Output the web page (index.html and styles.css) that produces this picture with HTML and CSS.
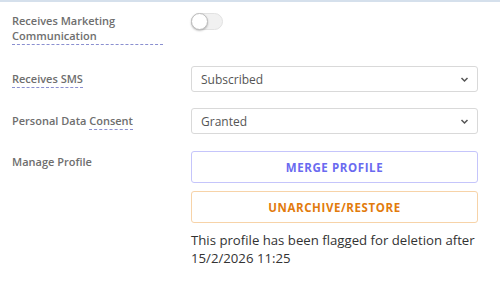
FILE: index.html
```html
<!DOCTYPE html>
<html>
<head>
<meta charset="utf-8">
<link rel="stylesheet" href="styles.css">
</head>
<body>
<div class="panel">
  <div class="row row-toggle">
    <div class="label label-two"><span class="wide-dotted">Receives Marketing<br>Communication</span></div>
    <div class="field"><span class="toggle"><span class="knob"></span></span></div>
  </div>
  <div class="row row-select">
    <div class="label"><span class="dotted">Receives SMS</span></div>
    <div class="field">
      <div class="select"><span>Subscribed</span>
        <svg class="chev" width="9" height="7" viewBox="0 0 9 7"><path d="M1.5 2 L4.5 5 L7.5 2" fill="none" stroke="#555" stroke-width="1.5"/></svg>
      </div>
    </div>
  </div>
  <div class="row row-select">
    <div class="label">Personal Data <span class="dotted">Consent</span></div>
    <div class="field">
      <div class="select"><span>Granted</span>
        <svg class="chev" width="9" height="7" viewBox="0 0 9 7"><path d="M1.5 2 L4.5 5 L7.5 2" fill="none" stroke="#555" stroke-width="1.5"/></svg>
      </div>
    </div>
  </div>
  <div class="row row-manage">
    <div class="label">Manage Profile</div>
    <div class="field stack">
      <button class="btn btn-merge">MERGE PROFILE</button>
      <button class="btn btn-restore">UNARCHIVE/RESTORE</button>
      <p class="note">This profile has been flagged for deletion after 15/2/2026 11:25</p>
    </div>
  </div>
</div>
</body>
</html>
```

FILE: styles.css
```css
html, body {
  margin: 0;
  padding: 0;
  background: #fff;
}
body {
  font-family: "Open Sans", "Noto Sans", sans-serif;
  width: 500px;
  height: 290px;
  overflow: hidden;
}
.panel {
  border-top: 2px solid #d5e0ec;
  padding: 11px 22px 0 12px;
}
.row {
  display: grid;
  grid-template-columns: 179px 1fr;
}
.label {
  font-size: 11px;
  font-weight: 600;
  color: #6e6e6e;
  line-height: 19px;
}
.label-two {
  line-height: 15px;
}
.wide-dotted {
  display: inline-block;
  width: 151px;
  border-bottom: 1px dashed #8a8fd0;
  padding-bottom: 1px;
}
.dotted {
  border-bottom: 1px dashed #8a8fd0;
  padding-bottom: 1px;
}
.row-toggle {
  height: 53px;
}
.toggle {
  display: inline-block;
  margin-top: 0;
  width: 30px;
  height: 15px;
  border-radius: 9px;
  background: #f1f1f1;
  border: 1px solid #e2e2e2;
  position: relative;
}
.knob {
  position: absolute;
  left: -1px;
  top: -1px;
  width: 15px;
  height: 15px;
  border-radius: 50%;
  background: #fff;
  border: 1px solid #bdbdbd;
  box-shadow: 0 1px 2px rgba(0,0,0,0.25);
}
.row-select {
  margin-bottom: 16px;
}
.row-select + .row-select {
  margin-bottom: 17px;
}
.row-select .label {
  padding-top: 3px;
}
.select {
  height: 26px;
  box-sizing: border-box;
  border: 1px solid #d9d9d9;
  border-radius: 3px;
  display: flex;
  align-items: center;
  justify-content: space-between;
  padding: 0 8px 0 9px;
  font-size: 12px;
  color: #555;
}
.row-manage .label {
  padding-top: 1px;
}
.stack {
  display: flex;
  flex-direction: column;
  gap: 8px;
}
.btn {
  height: 32px;
  background: #fff;
  border-radius: 3px;
  font-family: "Open Sans", sans-serif;
  font-weight: 700;
  font-size: 11.5px;
  letter-spacing: 0.6px;
  cursor: pointer;
}
.btn-merge {
  border: 1px solid #c5c5fb;
  color: #6a6af0;
}
.btn-restore {
  border: 1px solid #f7d3a8;
  color: #e27b0c;
}
.note {
  margin: 0;
  font-size: 13.2px;
  line-height: 18px;
  color: #333;
}
```
